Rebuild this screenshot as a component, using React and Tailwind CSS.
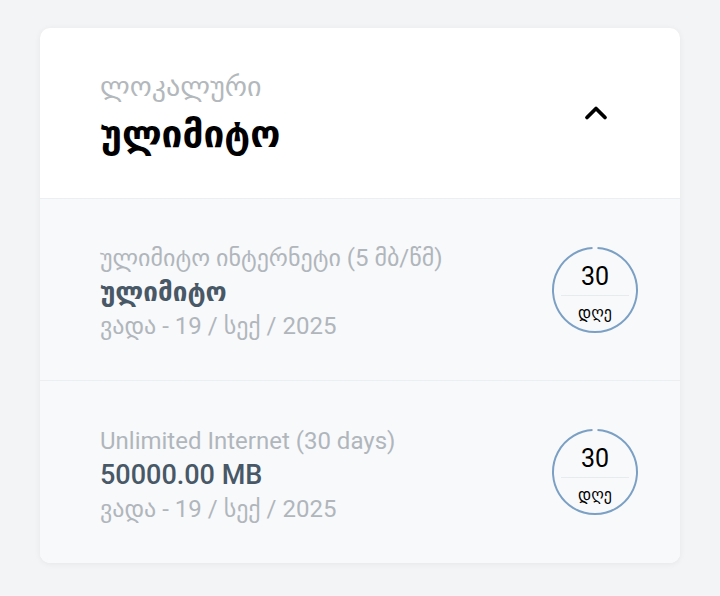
import { ChevronUp } from 'lucide-react';

const packages = [
    { label: 'ულიმიტო ინტერნეტი (5 მბ/წმ)', amount: 'ულიმიტო', bold: true, expires: 'ვადა - 19 / სექ / 2025', days: 30 },
    { label: 'Unlimited Internet (30 days)', amount: '50000.00 MB', bold: false, expires: 'ვადა - 19 / სექ / 2025', days: 30 },
];

function DaysRing({ days }) {
    return (
        <div className="relative w-[88px] h-[88px] shrink-0">
            <svg width="88" height="88" viewBox="0 0 88 88" className="absolute inset-0">
                <path d="M 46.5 2.1 A 42 42 0 1 1 41.5 2.1" fill="none" stroke="#7ba0c4" strokeWidth="2" />
            </svg>
            <div className="absolute inset-0 flex flex-col items-center pt-[18px]">
                <span className="text-[25px] leading-[26px] text-black">{days}</span>
                <div className="w-[68px] h-px bg-[#e8ebee] mt-[5px] mb-[7px]" />
                <span className="text-[16px] leading-[20px] text-black">დღე</span>
            </div>
        </div>
    );
}

export default function App() {
    return (
        <div className="min-h-screen bg-[#f3f4f6] px-10 pt-7 pb-8" style={{ fontFamily: 'Roboto, "DejaVu Sans", sans-serif' }}>
            <div className="bg-white rounded-[10px] shadow-[0_1px_6px_rgba(0,0,0,0.06)] overflow-hidden">
                <div className="h-[171px] flex items-center justify-between pl-[60px] pr-[66px] border-b border-[#eceff2]">
                    <div className="flex flex-col gap-[7px]">
                        <span className="text-[28px] leading-[36px] text-[#b3b8bc]">ლოკალური</span>
                        <span className="text-[37px] leading-[46px] font-bold text-black">ულიმიტო</span>
                    </div>
                    <ChevronUp size={36} strokeWidth={2.5} className="text-black" />
                </div>
                {packages.map((p, i) => (
                    <div key={i} className={'h-[182px] bg-[#f8f9fb] flex items-center justify-between pl-[60px] pr-[41px]' + (i === 0 ? ' border-b border-[#eceff2]' : '')}>
                        <div className="flex flex-col pt-[5px]">
                            <span className="text-[24px] leading-[34px] text-[#b0b6bb]">{p.label}</span>
                            <span className={'leading-[34px] text-[#485866] ' + (p.bold ? 'text-[26px] font-bold' : 'text-[27px] font-medium')}>{p.amount}</span>
                            <span className="text-[24px] leading-[34px] text-[#b0b6bb]">{p.expires}</span>
                        </div>
                        <DaysRing days={p.days} />
                    </div>
                ))}
            </div>
        </div>
    );
}
